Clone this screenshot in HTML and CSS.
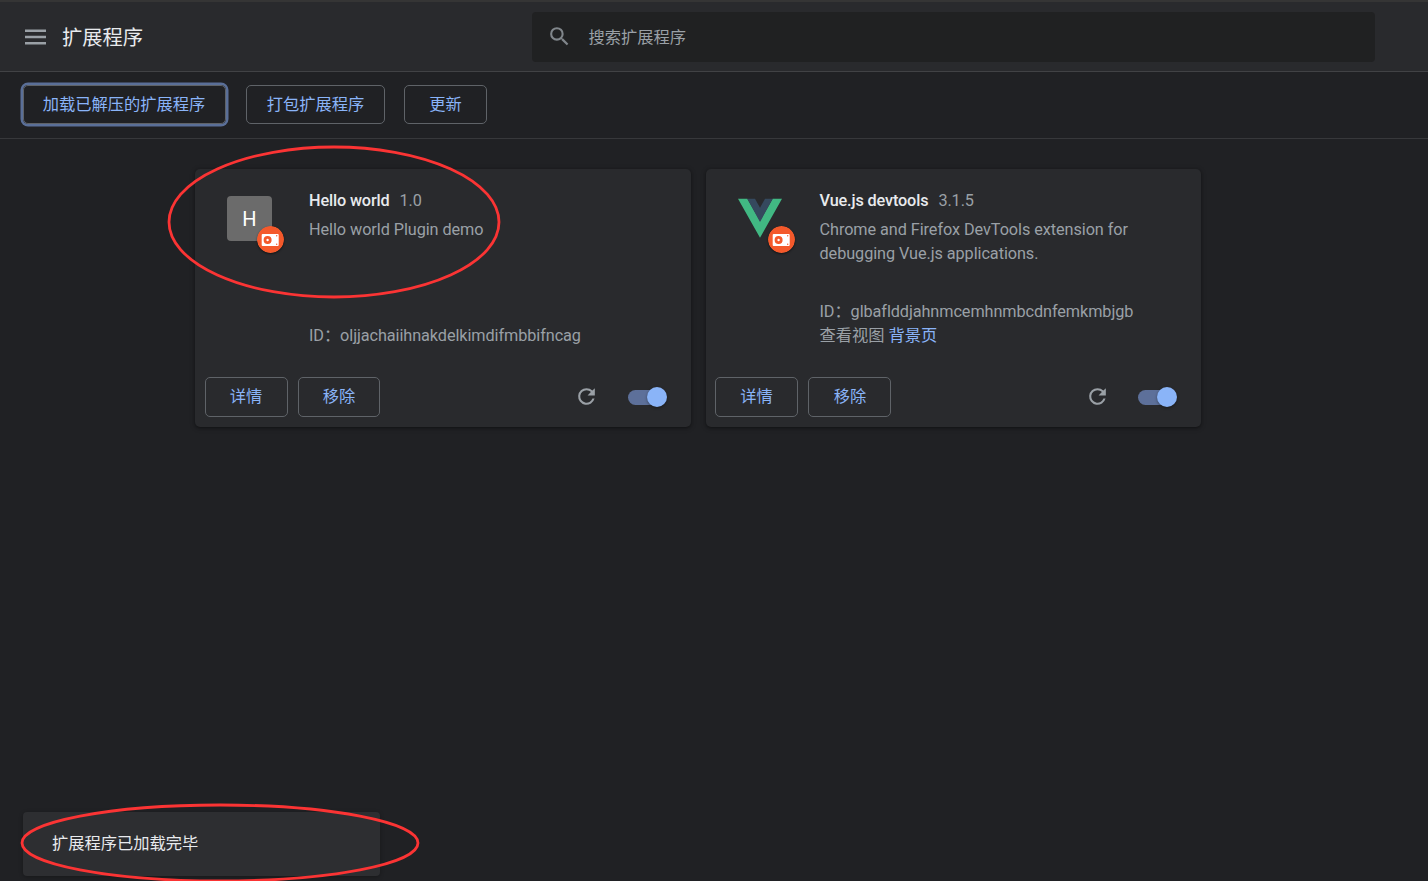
FILE: index.html
```html
<!DOCTYPE html>
<html lang="zh-CN">
<head>
<meta charset="utf-8">
<title>扩展程序</title>
<link rel="stylesheet" href="styles.css">
</head>
<body>
<svg class="defs" width="0" height="0">
  <symbol id="badge" viewBox="0 0 27 27">
    <circle cx="13.5" cy="13.5" r="13.5" fill="#f4592b"/>
    <rect x="4.7" y="8" width="17" height="12" rx="1" fill="#fff"/>
    <circle cx="10.6" cy="14" r="2.6" fill="none" stroke="#f4592b" stroke-width="2.8"/>
    <circle cx="19.7" cy="9.8" r=".7" fill="#f4592b"/>
    <circle cx="19.7" cy="18.2" r=".7" fill="#f4592b"/>
  </symbol>
  <symbol id="reload" viewBox="0 0 24 24">
    <path fill="#9aa0a6" d="M17.65 6.35A7.96 7.96 0 0 0 12 4a8 8 0 1 0 7.73 10h-2.08A6 6 0 1 1 12 6c1.66 0 3.14.69 4.22 1.78L13 11h7V4z"/>
  </symbol>
</svg>
<header class="toolbar">
  <svg class="menu" viewBox="0 0 22 16"><path fill="#9aa0a6" d="M1 .6h21v2.4H1zM1 6.800h21v2.4H1zM1 13h21v2.4H1z"/></svg>
  <h1 class="title">扩展程序</h1>
  <div class="search">
    <svg class="search-icon" viewBox="0 0 24 24"><path fill="#80868b" d="M15.5 14h-.79l-.28-.27A6.47 6.47 0 0 0 16 9.5 6.5 6.5 0 1 0 9.5 16c1.61 0 3.09-.59 4.23-1.57l.27.28v.79l5 4.99L20.49 19zm-6 0a4.5 4.5 0 1 1 0-9 4.5 4.5 0 0 1 0 9z"/></svg>
    <span>搜索扩展程序</span>
  </div>
</header>
<nav class="dev">
  <button class="btn load">加载已解压的扩展程序</button>
  <button class="btn pack">打包扩展程序</button>
  <button class="btn">更新</button>
</nav>
<main class="cards">
  <article class="card">
    <div class="info">
      <div class="icon"><span class="letter">H</span><svg class="badge"><use href="#badge"/></svg></div>
      <div class="content">
        <div class="name">Hello world<span class="version">1.0</span></div>
        <div class="desc">Hello world Plugin demo</div>
        <div class="ids">ID：oljjachaiihnakdelkimdifmbbifncag</div>
      </div>
    </div>
    <footer class="actions">
      <button class="btn">详情</button><button class="btn">移除</button>
      <svg class="reload"><use href="#reload"/></svg>
      <span class="toggle"><i class="knob"></i></span>
    </footer>
  </article>
  <article class="card">
    <div class="info">
      <div class="icon">
        <svg class="vue" viewBox="0 0 44 40"><path fill="#41b883" d="M0 .8h9.300L22 23 34.700 .8H44L22 39.800z"/><path fill="#35495e" d="M9.300 .8H17L22 9.800 27 .8h7.700L22 24z"/></svg>
        <svg class="badge"><use href="#badge"/></svg>
      </div>
      <div class="content">
        <div class="name">Vue.js devtools<span class="version">3.1.5</span></div>
        <div class="desc">Chrome and Firefox DevTools extension for debugging Vue.js applications.</div>
        <div class="ids">ID：glbaflddjahnmcemhnmbcdnfemkmbjgb<br><span class="views">查看视图 <a class="link">背景页</a></span></div>
      </div>
    </div>
    <footer class="actions">
      <button class="btn">详情</button><button class="btn">移除</button>
      <svg class="reload"><use href="#reload"/></svg>
      <span class="toggle"><i class="knob"></i></span>
    </footer>
  </article>
</main>
<div class="toast">扩展程序已加载完毕</div>
<svg class="marks" viewBox="0 0 1428 881">
  <ellipse cx="334" cy="222" rx="165" ry="75"/>
  <ellipse cx="220" cy="843" rx="198" ry="38"/>
</svg>
</body>
</html>
```
FILE: styles.css
```css
* { box-sizing: border-box; }
body {
  margin: 0;
  height: 881px;
  overflow: hidden;
  background: #202124;
  color: #9aa0a6;
  font: 16.25px/24px Roboto, "Noto Sans CJK SC", sans-serif;
}
.defs { position: absolute; }
.toolbar {
  height: 72px;
  display: flex;
  align-items: center;
  padding: 0 53px 0 24px;
  background: #292a2d;
  border-top: 2px solid #353535;
  border-bottom: 1px solid #414245;
}
.menu { width: 22px; height: 16px; margin-right: 16px; }
.title { margin: 0; width: 470px; padding-top: 3px; font-size: 20.3px; font-weight: 400; color: #e8eaed; }
.search {
  flex: 1;
  height: 50px;
  display: flex;
  align-items: center;
  padding-left: 15px;
  border-radius: 4px;
  background: #202122;
}
.search span { padding-top: 2px; }
.search-icon { width: 25px; height: 25px; margin-right: 16.500px; }
.dev {
  height: 67px;
  display: flex;
  padding: 13px 23px 0;
  border-bottom: 1px solid #37383b;
}
.btn {
  width: 83px;
  height: 40px;
  padding: 0 1px 0 0;
  border: 1px solid #5f6368;
  border-radius: 5px;
  background: none;
  color: #8ab4f8;
  font: inherit;
  font-weight: 400;
}
.btn + .btn { width: 82px; padding: 0; }
.card + .card .btn + .btn { width: 83px; }
.dev .btn { height: 39px; width: 83px; padding: 0; }
.dev .load { width: 203px; margin-right: 20px; padding-right: 1px; box-shadow: 0 0 0 2.5px #5a6f98; }
.dev .pack { width: 139px; margin-right: 19px; }
.cards {
  display: grid;
  grid-template-columns: 496px 495px;
  gap: 15px;
  padding: 30px 0 0 195px;
}
.card {
  height: 258px;
  display: flex;
  flex-direction: column;
  border-radius: 5px;
  background: #292a2d;
  box-shadow: 0 1px 3px rgba(0, 0, 0, .35), 0 1px 5px 1px rgba(0, 0, 0, .15);
}
.info { height: 198px; display: flex; padding: 20px 20px 0 32px; }
.icon { position: relative; width: 82px; padding-top: 7px; }
.letter {
  display: block;
  width: 45px;
  height: 45px;
  border-radius: 4px;
  background: #6b6b6b;
  color: #fff;
  font-size: 20px;
  line-height: 46px;
  text-align: center;
}
.vue { display: block; width: 44px; height: 40px; margin-top: 2px; }
.badge {
  position: absolute;
  left: 30px;
  top: 37px;
  width: 27px;
  height: 27px;
  border-radius: 50%;
  box-shadow: 0 1px 2px rgba(0, 0, 0, .5);
}
.content { flex: 1; display: flex; flex-direction: column; height: 159px; }
.card + .card .content { margin-left: -.5px; }
.name { color: #e8eaed; font-weight: 500; letter-spacing: -.14px; margin-bottom: 5px; }
.version { margin-left: 10px; color: #9aa0a6; font-weight: 400; letter-spacing: -.1px; }
.desc { width: 350px; letter-spacing: -.07px; }
.ids { margin-top: auto; letter-spacing: -.08px; }
.views { letter-spacing: 0; }
.link { color: #8ab4f8; }
.actions { height: 60px; display: flex; align-items: center; padding: 0 25px 0 10px; gap: 10px; }
.card + .card .actions { padding-left: 9.400px; }
.reload { width: 25px; height: 25px; margin: -1px 2px 0 auto; }
.card + .card .reload { margin-right: 0; }
.toggle { position: relative; width: 38px; height: 15px; margin-left: 17px; border-radius: 8px; background: #5d709a; }
.card + .card .toggle { margin-left: 18px; }
.knob {
  position: absolute;
  right: -.5px;
  top: -3px;
  width: 20px;
  height: 20px;
  border-radius: 50%;
  background: #8ab4f8;
  box-shadow: 0 1px 3px rgba(0, 0, 0, .4);
}
.toast {
  position: absolute;
  left: 23px;
  top: 812px;
  width: 357px;
  height: 64px;
  padding-left: 29px;
  border-radius: 4px;
  background: #2d2e31;
  color: #e8eaed;
  line-height: 63px;
  box-shadow: 0 1px 4px rgba(0, 0, 0, .3);
}
.marks { position: absolute; left: 0; top: 0; width: 1428px; height: 881px; pointer-events: none; fill: none; stroke: #fb3434; stroke-width: 2.8; }
```
